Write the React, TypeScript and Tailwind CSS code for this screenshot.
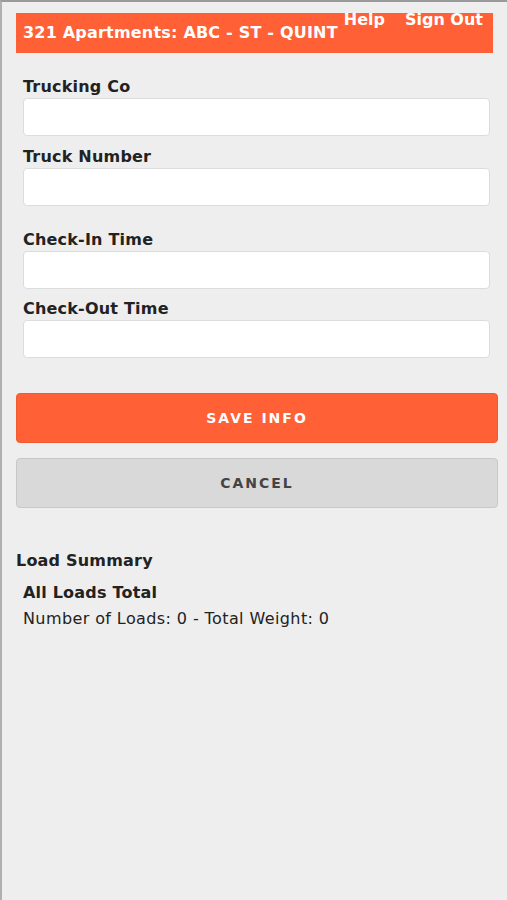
import React from 'react';

const font = { fontFamily: '"DejaVu Sans", Verdana, sans-serif' };

function Field({ label, className }: { label: string; className?: string }) {
  return (
    <div className={className}>
      <label className="block px-[21px] text-[16px] font-bold leading-[20px] tracking-[0.2px] text-[#222]">{label}</label>
      <div className="mt-[1px] pl-[21px] pr-[17px]">
        <input
          type="text"
          className="block h-[38px] w-full rounded-[4px] border border-[#dcdcdc] bg-white outline-none"
        />
      </div>
    </div>
  );
}

export default function App() {
  return (
    <div
      style={font}
      className="min-h-[900px] w-full border-t-2 border-l-2 border-t-[#9a9a9a] border-l-[#b0b0b0] bg-[#eeeeee]"
    >
      {/* Header bar */}
      <div className="px-[14px] pt-[11px]">
        <div className="flex h-[40px] items-start justify-between bg-[#ff6035] pl-[7px] pr-[10px] text-white">
          <span className="mt-[11px] text-[16px] font-bold leading-[18px] tracking-[0.2px]">321 Apartments: ABC - ST - QUINT</span>
          <div className="-mt-[2px] flex gap-[20px] text-[16px] font-bold leading-[18px]">
            <a>Help</a>
            <a>Sign Out</a>
          </div>
        </div>
      </div>

      {/* Form */}
      <Field label="Trucking Co" className="mt-[24px]" />
      <Field label="Truck Number" className="mt-[11px]" />
      <Field label="Check-In Time" className="mt-[24px]" />
      <Field label="Check-Out Time" className="mt-[10px]" />

      <div className="mt-[35px] flex flex-col gap-[15px] pl-[14px] pr-[9px]">
        <button className="h-[50px] w-full rounded-[4px] border border-[#f25a30] bg-[#ff6035] text-[14px] font-bold tracking-[2px] text-white">
          SAVE INFO
        </button>
        <button className="h-[50px] w-full rounded-[4px] border border-[#c8c8c8] bg-[#d9d9d9] text-[14px] font-bold tracking-[2px] text-[#444]">
          CANCEL
        </button>
      </div>

      {/* Summary */}
      <div className="mt-[43px] pl-[14px] text-[#222]">
        <h3 className="text-[16px] font-bold leading-[20px] tracking-[0.2px]">Load Summary</h3>
        <div className="mt-[12px] pl-[7px]">
          <h4 className="text-[16px] font-bold leading-[20px] tracking-[0.2px]">All Loads Total</h4>
          <p className="mt-[6px] text-[16px] leading-[20px] tracking-[0.4px]">Number of Loads: 0 - Total Weight: 0</p>
        </div>
      </div>
    </div>
  );
}
